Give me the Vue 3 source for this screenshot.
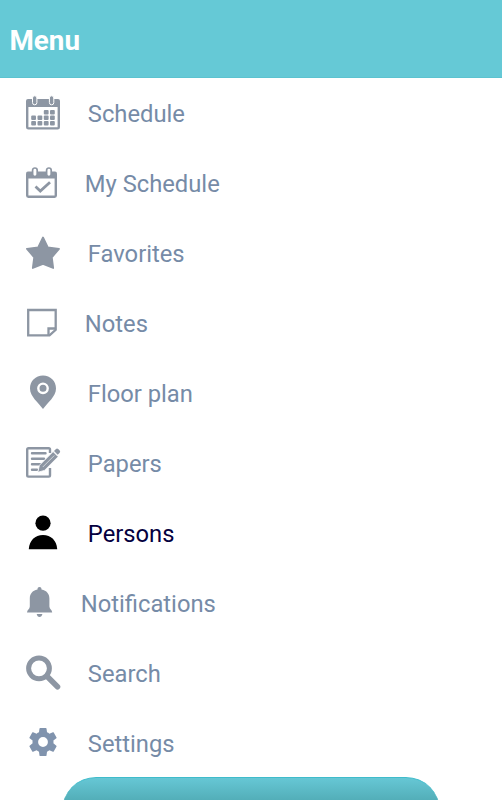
<template>
    <div class="menu-page">
        <header class="menu-header">
            <h1>Menu</h1>
        </header>
        <nav class="menu-list">
            <a v-for="item in items" :key="item.icon" class="menu-item" :class="{ active: item.icon == current }" @click="onSelect(item)">
                <svg class="icon" :class="item.icon" :viewBox="'0 0 ' + item.width + ' 34'" :width="item.width" height="34">
                    <g v-if="item.icon == 'schedule'">
                        <path d="M1.2 11V31.2Q1.2 32.4 2.4 32.4H31.600Q32.800 32.400 32.800 31.200V11" fill="none" stroke="currentColor" stroke-width="2.4" />
                        <path d="M0 11V5Q0 3 2 3H32Q34 3 34 5V11Z" />
                        <rect v-for="x in [8.7, 25.6]" :key="x" class="ring" :x="x - 2.2" y="-.2" width="4.4" height="9" rx="2.2" />
                        <rect v-for="(d, i) in days" :key="i" :x="d[0]" :y="d[1]" width="4.8" height="4.4" rx="1" />
                    </g>
                    <g v-else-if="item.icon == 'my-schedule'">
                        <path d="M1.200 11V29.600Q1.200 30.800 2.400 30.800H28.600Q29.800 30.800 29.800 29.600V11" fill="none" stroke="currentColor" stroke-width="2.4" />
                        <path d="M0 12.500V7.500Q0 5.500 2 5.500H29Q31 5.500 31 7.500V12.500Z" />
                        <rect v-for="x in [8.9, 22.9]" :key="x" class="clip" :x="x - 2.3" y="2" width="4.6" height="8.5" rx="2.3" />
                        <path d="M9.500 20.500L14.300 25L24 16.300" fill="none" stroke="currentColor" stroke-width="2.8" />
                    </g>
                    <path v-else-if="item.icon == 'favorites'" class="soft" d="M17 1.500L21.800 11.300L33 12.800L25.800 21.300L27.200 32L17 28L6.800 32L8.200 21.300L1 12.800L12.200 11.300Z" />
                    <g v-else-if="item.icon == 'notes'" fill="none" stroke="currentColor" stroke-width="2.3">
                        <path d="M2.200 4H29.700V23.800L23.500 29.400H2.200Z" />
                        <path d="M22.500 29.300V22.500H29.700" />
                    </g>
                    <g v-else-if="item.icon == 'floor'">
                        <path d="M17 -.5C9.600 -.5 4 5.100 4 12.400C4 20.500 12.500 26.500 17 33C21.500 26.500 30 20.500 30 12.400C30 5.100 24.400 -.5 17 -.5Z" />
                        <circle cx="17" cy="12.3" r="4.7" fill="none" stroke="#fff" stroke-width="2.4" />
                    </g>
                    <g v-else-if="item.icon == 'papers'">
                        <path d="M24 7V3.500Q24 2.200 22.700 2.200H2.500Q1.200 2.200 1.200 3.500V29.300Q1.200 30.600 2.500 30.600H22.700Q24 30.600 24 29.300V22" fill="none" stroke="currentColor" stroke-width="2.4" />
                        <path d="M6 7.300H19.500M6 12.800H18M6 18.200H14M6 23.700H11" fill="none" stroke="currentColor" stroke-width="2.4" stroke-linecap="round" />
                        <path d="M11.800 26.300L13.400 19.300L27.100 5.600L32.200 10.700L18.500 24.400Z" stroke="#fff" stroke-width=".8" />
                        <path d="M28 4.900L30 2.900Q31.100 1.900 32.200 3L33.700 4.500Q34.700 5.600 33.700 6.700L31.700 8.700Z" />
                        <path d="M16.800 21L28.300 9.500" fill="none" stroke="#fff" stroke-width=".6" />
                    </g>
                    <g v-else-if="item.icon == 'persons'">
                        <circle cx="17" cy="7.2" r="7.6" />
                        <path d="M2.800 33.200C3.300 24.600 9 19 17 19S30.700 24.600 31.200 33.200Z" />
                    </g>
                    <g v-else-if="item.icon == 'notifications'">
                        <path d="M13.500 1C11.900 1 11.500 2.200 11.500 3.500C6.300 4.600 3.800 7.900 3.800 12.500V20.500C3.800 23 1 24 1 26.500H26.200C26.200 24 23.400 23 23.400 20.500V12.500C23.400 7.900 20.800 4.600 15.500 3.500C15.500 2.200 15.100 1 13.500 1Z" />
                        <path d="M10.700 28H16.400Q15.700 31 13.500 31T10.700 28Z" />
                    </g>
                    <g v-else-if="item.icon == 'search'" fill="none" stroke="currentColor">
                        <circle cx="13" cy="12.300" r="10.400" stroke-width="5" />
                        <path d="M21 20.300L31.500 30.700" stroke-width="5.600" stroke-linecap="round" />
                    </g>
                    <path v-else transform="translate(.2 -.8) scale(1.4)" d="M12 15.500A3.500 3.500 0 0 1 8.500 12 3.500 3.500 0 0 1 12 8.500a3.500 3.500 0 0 1 3.500 3.500 3.500 3.500 0 0 1-3.500 3.500m7.430-2.530c.04-.32.07-.64.07-.97s-.03-.66-.07-1l2.110-1.630c.19-.15.24-.42.12-.64l-2-3.460c-.12-.22-.39-.31-.61-.22l-2.490 1c-.52-.39-1.060-.73-1.690-.98l-.37-2.650A.506.506 0 0 0 14 2h-4c-.25 0-.46.18-.5.42l-.37 2.650c-.63.25-1.170.59-1.690.98l-2.490-1c-.22-.09-.49 0-.61.22l-2 3.460c-.13.22-.07.49.12.64L4.570 11c-.04.34-.07.67-.07 1s.03.65.07.97l-2.110 1.660c-.19.15-.25.42-.12.64l2 3.460c.12.22.39.3.61.22l2.490-1.010c.52.4 1.060.74 1.690.99l.37 2.650c.04.24.25.42.5.42h4c.25 0 .46-.18.5-.42l.37-2.650c.63-.26 1.170-.59 1.690-.99l2.490 1.010c.22.08.49 0 .61-.22l2-3.460c.12-.22.07-.49-.12-.64z" />
                </svg>
                <span class="label">{{ item.label }}</span>
            </a>
        </nav>
        <button class="bottom-btn" type="button"></button>
    </div>
</template>

<script setup>
    import { ref } from 'vue'

    const current = ref('persons');

    const items = [
        { icon: 'schedule', label: 'Schedule', width: 34 },
        { icon: 'my-schedule', label: 'My Schedule', width: 31 },
        { icon: 'favorites', label: 'Favorites', width: 34 },
        { icon: 'notes', label: 'Notes', width: 31 },
        { icon: 'floor', label: 'Floor plan', width: 34 },
        { icon: 'papers', label: 'Papers', width: 34 },
        { icon: 'persons', label: 'Persons', width: 34 },
        { icon: 'notifications', label: 'Notifications', width: 27 },
        { icon: 'search', label: 'Search', width: 34 },
        { icon: 'settings', label: 'Settings', width: 34 },
    ];

    // calendar day squares
    const days = [
        [17.8, 14], [24, 14],
        [5.2, 19.5], [11.5, 19.5], [17.8, 19.5], [24, 19.5],
        [5.2, 25], [11.5, 25], [17.8, 25], [24, 25],
    ];

    const onSelect = (item)=>{
        current.value = item.icon;
    }
</script>

<style>
    body{
        background: #fff;
    }
</style>

<style scoped>
    .menu-page{
        height: 800px;
        overflow: hidden;
        display: flex;
        flex-direction: column;
        font-family: Roboto, "Liberation Sans", sans-serif;
        background: #fff;
    }
    .menu-header{
        flex: none;
        box-sizing: border-box;
        height: 78px;
        padding: 5px 9.5px 0;
        display: flex;
        align-items: center;
        background: #65c9d6;
        border-bottom: 1px solid #5cc3d0;
    }
    .menu-header h1{
        margin: 0;
        font-size: 27.8px;
        line-height: 34px;
        font-weight: 700;
        color: #fff;
    }
    .menu-list{
        flex: none;
        height: 699px;
    }
    .menu-item{
        box-sizing: border-box;
        height: 70px;
        padding-left: 26px;
        display: flex;
        align-items: center;
        gap: 27.8px;
        color: #768ba7;
        cursor: pointer;
    }
    .icon{
        flex: none;
        overflow: visible;
        color: #8d96a3;
        fill: currentColor;
    }
    .icon.settings{
        color: #8093ad;
    }
    .ring{
        stroke: #fff;
        stroke-width: 1;
    }
    .clip{
        fill: #fff;
        stroke: currentColor;
        stroke-width: 1.7;
    }
    .soft{
        stroke: currentColor;
        stroke-width: 1.8;
        stroke-linejoin: round;
    }
    .label{
        padding-top: 2px;
        font-size: 23.75px;
        line-height: 30px;
    }
    .active{
        color: #040040;
    }
    .active .icon{
        color: #000;
    }
    .bottom-btn{
        flex: none;
        align-self: center;
        box-sizing: border-box;
        width: 378px;
        height: 70px;
        padding: 0;
        border: 1px solid #3fbccb;
        border-width: 1px 0 0;
        border-radius: 34px;
        background: linear-gradient(#66c7d5, #52adb7 23px, #52adb7);
    }
</style>
